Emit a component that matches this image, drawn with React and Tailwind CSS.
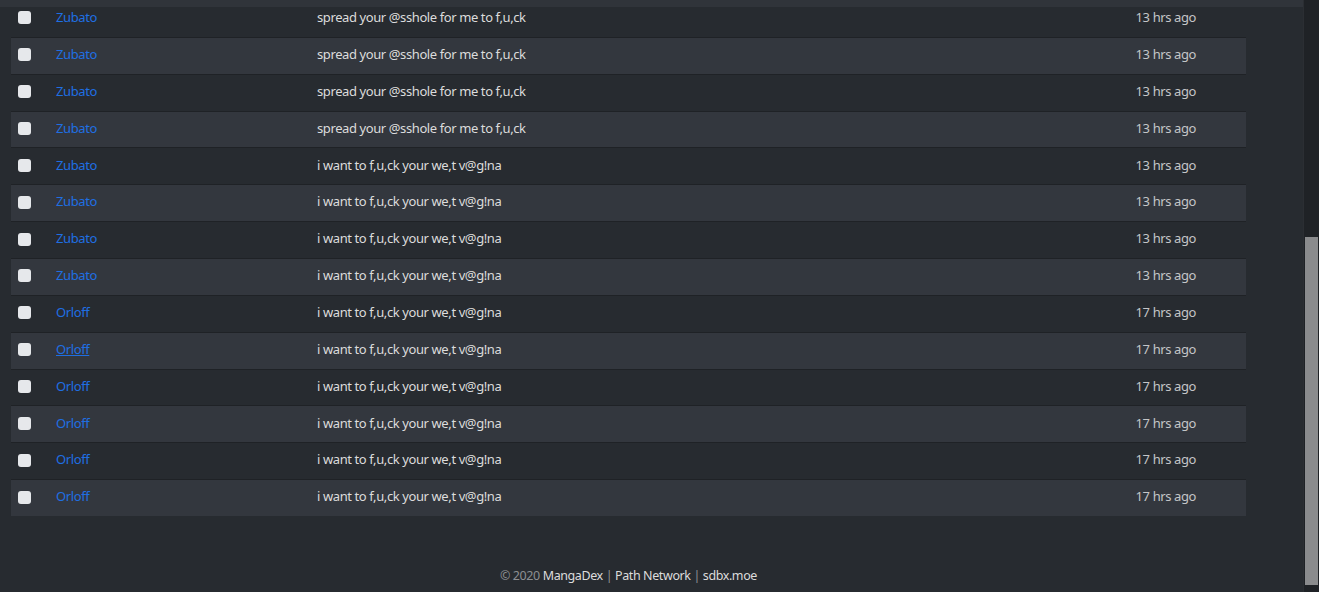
import React from "react";

const rows = [
  ["Zubato", "spread your @sshole for me to f,u,ck", "13 hrs ago"],
  ["Zubato", "spread your @sshole for me to f,u,ck", "13 hrs ago"],
  ["Zubato", "spread your @sshole for me to f,u,ck", "13 hrs ago"],
  ["Zubato", "spread your @sshole for me to f,u,ck", "13 hrs ago"],
  ["Zubato", "i want to f,u,ck your we,t v@g!na", "13 hrs ago"],
  ["Zubato", "i want to f,u,ck your we,t v@g!na", "13 hrs ago"],
  ["Zubato", "i want to f,u,ck your we,t v@g!na", "13 hrs ago"],
  ["Zubato", "i want to f,u,ck your we,t v@g!na", "13 hrs ago"],
  ["Orloff", "i want to f,u,ck your we,t v@g!na", "17 hrs ago"],
  ["Orloff", "i want to f,u,ck your we,t v@g!na", "17 hrs ago", true],
  ["Orloff", "i want to f,u,ck your we,t v@g!na", "17 hrs ago"],
  ["Orloff", "i want to f,u,ck your we,t v@g!na", "17 hrs ago"],
  ["Orloff", "i want to f,u,ck your we,t v@g!na", "17 hrs ago"],
  ["Orloff", "i want to f,u,ck your we,t v@g!na", "17 hrs ago"],
];

export default function App() {
  return (
    <div
      className="flex h-[592px] w-[1319px] overflow-hidden bg-[#272b30]"
      style={{ fontFamily: '"Noto Sans", "Open Sans", sans-serif' }}
    >
      <div className="relative flex flex-1 flex-col border-r border-[#2b2e33]">
        <div className="absolute left-0 right-0 top-0 h-[7px] bg-[#30343a]" />
        <div className="ml-[11px] w-[1235px]">
          {rows.map((r, i) => (
            <div
              key={i}
              className={`flex h-[36.86px] items-center border-t border-[#1f2226] pb-[2px] text-[13px] tracking-[-0.4px] ${
                i % 2 === 1 ? "bg-[#33373e]" : ""
              }`}
            >
              <div className="flex w-[45px] pl-[7px]">
                <span className="block h-[13px] w-[13px] rounded-[3px] bg-[#e6e8eb]" />
              </div>
              <div className="w-[261px]">
                <span className={`text-[#1f6fe3] ${r[3] ? "underline" : ""}`}>
                  {r[0]}
                </span>
              </div>
              <div className="flex-1 text-[#dcdcdc]">{r[1]}</div>
              <div className="w-[200px] pr-[50px] text-right text-[#c4c6c8]">
                {r[2]}
              </div>
            </div>
          ))}
        </div>
        <div className="flex-1" />
        <div className="ml-[11px] w-[1235px] pb-[6px] text-center text-[12.5px] tracking-[-0.4px] text-[#8d8f92]">
          © 2020 <span className="text-[#dcdcdc]">MangaDex</span> |{" "}
          <span className="text-[#dcdcdc]">Path Network</span> |{" "}
          <span className="text-[#dcdcdc]">sdbx.moe</span>
        </div>
      </div>
      <div className="flex w-[15px] flex-col bg-[#1f2226]">
        <div className="h-[237px]" />
        <div className="mx-[1px] h-[348px] bg-[#8a8b8d]" />
        <div className="flex-1" />
      </div>
    </div>
  );
}
